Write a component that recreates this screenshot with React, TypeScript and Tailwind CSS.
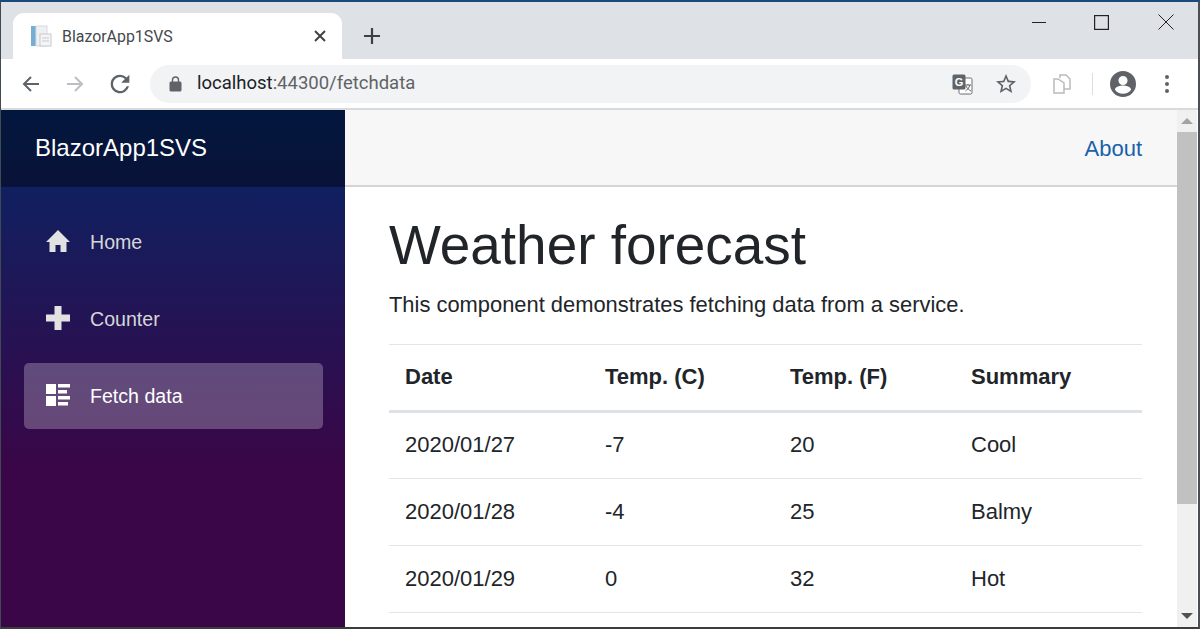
import React from "react";

const rows = [
  ["2020/01/27", "-7", "20", "Cool"],
  ["2020/01/28", "-4", "25", "Balmy"],
  ["2020/01/29", "0", "32", "Hot"],
];

function NavItem({ label, active, children }: { label: string; active?: boolean; children: React.ReactNode }) {
  return (
    <div className={`flex h-[66px] w-[299px] items-center rounded-[5px] pl-[21px] text-[19.6px] ${active ? "bg-white/25 text-white" : "text-[#d7d7d7]"}`}>
      <span className="flex w-[45px] text-[#e2e2e2]">{children}</span>
      <span className="pt-[2px]">{label}</span>
    </div>
  );
}

export default function App() {
  return (
    <div className="flex h-[629px] w-[1200px] flex-col overflow-hidden border-t-2 border-b-2 border-l border-r-2 border-t-[#1d4a7d] border-b-[#3c3c3c] border-l-[#3f4a55] border-r-[#4a4f55] bg-white font-['Liberation_Sans',sans-serif]">
      {/* tab strip */}
      <div className="flex h-[57px] shrink-0 items-end bg-[#dee1e6] pl-[12px]">
        <div className="flex h-[46px] w-[329px] items-center rounded-t-[11px] bg-white pl-[17px] pr-[14px] font-['Roboto',sans-serif] text-[15.9px] text-[#45484c]">
          <svg width="22" height="24" viewBox="0 0 22 24" className="mr-[10px]">
            <rect x="1" y="2" width="5" height="20" fill="#74aed6" />
            <rect x="6" y="2" width="11" height="20" fill="#eef0f2" stroke="#d8dade" />
            <rect x="10" y="10" width="11" height="12" fill="#f4f5f6" stroke="#c6c9cd" />
            <path d="M12 14h7M12 17h7" stroke="#c6c9cd" />
          </svg>
          <span className="flex-1 pt-[1px]">BlazorApp1SVS</span>
          <svg width="14" height="14" viewBox="0 0 14 14" stroke="#3c4043" strokeWidth="1.9" className="mr-[1px]">
            <path d="M2 2l10 10M12 2L2 12" />
          </svg>
        </div>
        <svg width="18" height="18" viewBox="0 0 18 18" stroke="#3c4043" strokeWidth="2.2" className="mb-[14px] ml-[21px]">
          <path d="M9 1v16M1 9h16" />
        </svg>
        <div className="flex-1" />
        <div className="mb-[29px] flex items-center">
          <svg width="14" height="14" viewBox="0 0 14 14" stroke="#222" className="mr-[48px]"><path d="M0 7.500h14" /></svg>
          <svg width="15" height="15" viewBox="0 0 15 15" fill="none" stroke="#222" strokeWidth="1.2" className="mr-[49px]"><rect x=".6" y=".6" width="13.8" height="13.8" /></svg>
          <svg width="16" height="16" viewBox="0 0 16 16" stroke="#222" className="mr-[24px]"><path d="M.5.5l15 15M15.500 .5l-15 15" /></svg>
        </div>
      </div>
      {/* toolbar */}
      <div className="flex h-[51px] shrink-0 items-center border-b-2 border-[#d9dadc] bg-white pt-[1px]">
        <svg width="20" height="20" viewBox="0 0 20 20" fill="none" stroke="#5f6368" strokeWidth="2" className="ml-[20px]"><path d="M18 10H3M10 3l-7 7 7 7" /></svg>
        <svg width="20" height="20" viewBox="0 0 20 20" fill="none" stroke="#bcbec1" strokeWidth="2" className="ml-[24px]"><path d="M2 10h15M10 3l7 7-7 7" /></svg>
        <svg width="28" height="28" viewBox="0 0 24 24" fill="#5f6368" className="ml-[21px]"><path d="M17.65 6.350A7.960 7.960 0 0 0 12 4a8 8 0 1 0 7.730 10h-2.080A6 6 0 1 1 12 6c1.660 0 3.140.690 4.220 1.780L13 11h7V4l-2.350 2.350z" /></svg>
        <div className="ml-[16px] flex h-[38px] w-[881px] items-center rounded-full bg-[#f1f3f4] pl-[19px] font-['Roboto',sans-serif] text-[18.5px]">
          <svg width="13" height="16" viewBox="0 0 13 16" fill="#5f6368"><path d="M11 5.500h-.8V4a3.700 3.700 0 0 0-7.400 0v1.500H2A1.500 1.500 0 0 0 .5 7v7A1.500 1.500 0 0 0 2 15.500h9a1.500 1.500 0 0 0 1.500-1.500V7A1.500 1.500 0 0 0 11 5.500zM4.200 4a2.300 2.300 0 0 1 4.600 0v1.500H4.200V4z" /></svg>
          <span className="ml-[15px] text-[#202124]">localhost</span>
          <span className="text-[#5f6368]">:44300/fetchdata</span>
          <div className="flex-1" />
          <svg width="21" height="21" viewBox="0 0 21 21" className="mr-[21px]">
            <rect x="7" y="4" width="13" height="16" rx="1.500" fill="#fff" stroke="#6a6e73" />
            <rect x="0.500" y="0.500" width="13" height="15" rx="1.500" fill="#5f6368" />
            <text x="7" y="12" textAnchor="middle" fontSize="11" fontWeight="700" fill="#fff" fontFamily="'Liberation Sans', sans-serif">G</text>
            <path d="M13 11h6M16 10v1M18 11c-1 3-3 5-4.500 6M14 12c1 2 3 4 5 5" stroke="#5f6368" fill="none" />
          </svg>
          <svg width="24" height="24" viewBox="0 0 24 24" fill="#5f6368" className="mr-[13px]"><path d="M22 9.240l-7.190-.62L12 2 9.190 8.630 2 9.240l5.460 4.730L5.820 21 12 17.270 18.180 21l-1.630-7.030L22 9.240zM12 15.400l-3.760 2.270 1-4.280-3.320-2.880 4.380-.38L12 6.100l1.710 4.040 4.380.38-3.320 2.880 1 4.280L12 15.400z" /></svg>
        </div>
        <svg width="18" height="20" viewBox="0 0 18 20" fill="none" stroke="#b9babc" strokeWidth="1.500" className="ml-[22px]"><path d="M7 4V1h6l4 4v10h-6" /><path d="M5 5H1v14h10V9z" /></svg>
        <div className="ml-[21px] h-[22px] w-px bg-[#dcdddf]" />
        <svg width="26" height="26" viewBox="0 0 24 24" fill="#5f6368" className="ml-[17px]"><path d="M12 0a12 12 0 1 0 0 24 12 12 0 0 0 0-24zm0 4.500a4.200 4.200 0 1 1 0 8.400 4.200 4.200 0 0 1 0-8.400zM12 21c-3 0-5.800-1.500-7.500-3.800.1-2.500 5-3.800 7.500-3.800s7.400 1.300 7.500 3.800A9.300 9.300 0 0 1 12 21z" /></svg>
        <svg width="6" height="20" viewBox="0 0 6 20" fill="#5f6368" className="ml-[28px]"><circle cx="3" cy="3" r="2" /><circle cx="3" cy="10" r="2" /><circle cx="3" cy="17" r="2" /></svg>
      </div>
      {/* page */}
      <div className="flex min-h-0 flex-1">
        <aside className="flex w-[344px] shrink-0 flex-col bg-[linear-gradient(180deg,#052767_0%,#3a0647_70%)]">
          <div className="flex h-[77px] shrink-0 items-center bg-black/40 pb-[1px] pl-[34px] text-[24px] text-white">BlazorApp1SVS</div>
          <nav className="flex flex-col gap-[11px] pl-[23px] pt-[22px]">
            <NavItem label="Home">
              <svg width="26" height="24" viewBox="0 0 26 24" fill="currentColor" className="-mt-[2px]"><path d="M13 1 1 13h3.500v10h6v-7h5v7h6V13H25z" /></svg>
            </NavItem>
            <NavItem label="Counter">
              <svg width="26" height="26" viewBox="0 0 26 26" fill="currentColor" className="-mt-[2px]"><path d="M9.500 1h7v8.500H25v7h-8.500V25h-7v-8.500H1v-7h8.500z" /></svg>
            </NavItem>
            <NavItem label="Fetch data" active>
              <svg width="26" height="24" viewBox="0 0 26 24" fill="#fff" className="-mt-[2px]"><path d="M1 1h10v10H1zM1 13h10v10H1zM13 1h12v3.500H13zM13 7h9v3.500h-9zM13 13h12v3.500H13zM13 19h10v3.500H13z" /></svg>
            </NavItem>
          </nav>
        </aside>
        <main className="min-w-0 flex-1">
          <div className="flex h-[77px] items-center justify-end border-b-2 border-[#d6d5d5] bg-[#f7f7f7] pr-[35px] text-[22px]">
            <span className="pt-[1px] text-[#1861ac]">About</span>
          </div>
          <div className="pl-[44px] pr-[35px] text-[#212529]">
            <h1 className="mt-[22px] text-[54.9px] leading-[72px]">Weather forecast</h1>
            <p className="mt-[8px] text-[21.9px] leading-[32px]">This component demonstrates fetching data from a service.</p>
            <table className="mt-[23px] w-full table-fixed border-collapse text-[22px]">
              <colgroup>
                <col className="w-[200px]" />
                <col className="w-[185px]" />
                <col className="w-[181px]" />
                <col />
              </colgroup>
              <thead>
                <tr className="h-[67px] border-t border-b-[3px] border-t-[#e3e5e8] border-b-[#dee2e6]">
                  {["Date", "Temp. (C)", "Temp. (F)", "Summary"].map((h) => (
                    <th key={h} className="pb-[2px] pl-[16px] text-left font-bold">{h}</th>
                  ))}
                </tr>
              </thead>
              <tbody>
                {rows.map((r) => (
                  <tr key={r[0]} className="h-[67px] border-b border-[#e3e5e8]">
                    {r.map((c, i) => (
                      <td key={i} className="pb-[2px] pl-[16px]">{c}</td>
                    ))}
                  </tr>
                ))}
              </tbody>
            </table>
          </div>
        </main>
        <div className="flex w-[20px] shrink-0 flex-col items-center bg-[#f0f0f0]">
          <div className="flex h-[22px] items-center">
            <div className="h-0 w-0 border-x-[6px] border-b-[6px] border-x-transparent border-b-[#a3a3a3]" />
          </div>
          <div className="h-[372px] w-full bg-[#c1c1c1]" />
          <div className="flex-1" />
          <div className="flex h-[22px] items-center">
            <div className="h-0 w-0 border-x-[6px] border-t-[6px] border-x-transparent border-t-[#505050]" />
          </div>
        </div>
        <div className="w-[1px] shrink-0 bg-white" />
      </div>
    </div>
  );
}
